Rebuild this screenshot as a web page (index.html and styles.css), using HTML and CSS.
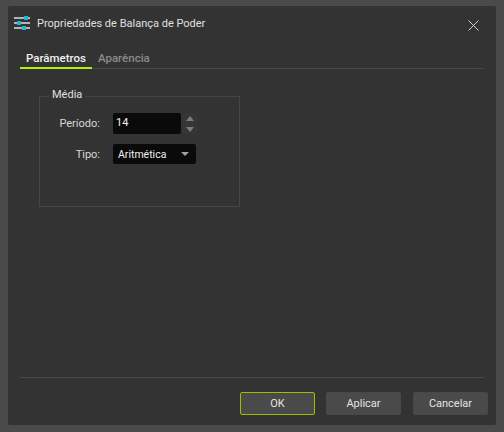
FILE: index.html
```html
<!DOCTYPE html>
<html lang="pt">
<head>
<meta charset="utf-8">
<title>Propriedades de Balança de Poder</title>
<link rel="stylesheet" href="styles.css">
</head>
<body>
<div class="dialog">
  <header class="titlebar">
    <svg class="app-icon" width="16" height="14" viewBox="0 0 16 14">
      <rect x="0" y="1" width="16" height="2" fill="#b4b4b4"/>
      <rect x="0" y="6" width="16" height="2" fill="#b4b4b4"/>
      <rect x="0" y="11" width="16" height="2" fill="#b4b4b4"/>
      <rect x="10" y="0" width="4" height="4" fill="#1fb8d0"/>
      <rect x="3" y="5" width="4" height="4" fill="#1fb8d0"/>
      <rect x="8" y="10" width="4" height="4" fill="#1fb8d0"/>
    </svg>
    <span class="title">Propriedades de Balança de Poder</span>
    <svg class="close" width="11" height="11" viewBox="0 0 11 11">
      <path d="M0.5 0.5 L10.5 10.5 M10.5 0.5 L0.5 10.5" stroke="#d0d0d0" stroke-width="1" fill="none"/>
    </svg>
  </header>
  <nav class="tabs">
    <span class="tab active">Parâmetros</span>
    <span class="tab">Aparência</span>
  </nav>
  <main class="content">
    <fieldset class="group">
      <legend class="legend">Média</legend>
      <div class="form">
        <label class="lbl">Período:</label>
        <div class="field-row">
          <div class="input">14</div>
          <div class="spin">
            <svg width="8" height="5" viewBox="0 0 8 5"><path d="M4 0 L8 5 L0 5 Z" fill="#7d7d7d"/></svg>
            <svg width="8" height="5" viewBox="0 0 8 5"><path d="M0 0 L8 0 L4 5 Z" fill="#7d7d7d"/></svg>
          </div>
        </div>
        <label class="lbl">Tipo:</label>
        <div class="select">
          <span>Aritmética</span>
          <svg width="8" height="4" viewBox="0 0 8 4"><path d="M0 0 L8 0 L4 4 Z" fill="#a0a0a0"/></svg>
        </div>
      </div>
    </fieldset>
  </main>
  <footer class="footer">
    <button class="btn primary">OK</button>
    <button class="btn">Aplicar</button>
    <button class="btn last">Cancelar</button>
  </footer>
</div>
</body>
</html>
```
FILE: styles.css
```css
* { box-sizing: border-box; }
html, body { height: 100%; }
body {
  margin: 0;
  padding: 6px 8px 7px;
  background: #4a4a4a;
  font-family: "Roboto", "Liberation Sans", sans-serif;
  font-size: 11px;
  color: #e4e4e4;
}
.dialog {
  height: 419px;
  background: #333333;
  border-radius: 2px;
  display: flex;
  flex-direction: column;
  padding: 0 12px;
}
.titlebar {
  height: 34px;
  display: flex;
  align-items: center;
  flex: none;
}
.app-icon { margin: 0 7px 0 -6px; flex: none; }
.title { flex: 1; color: #e0e0e0; font-size: 11px; }
.close { margin-right: 5px; margin-top: 4px; }
.tabs {
  margin-top: 3px;
  height: 26px;
  flex: none;
  display: flex;
  border-bottom: 1px solid #484848;
}
.tab {
  padding: 8px 6px 0;
  font-size: 11.5px;
  font-weight: 500;
  color: #8c8c8c;
  height: 26px;
}
.tab.active {
  color: #f0f0f0;
  border-bottom: 2px solid #b5f000;
}
.content { flex: 1; padding: 20px 0 0 19px; border-bottom: 1px solid #484848; }
.group {
  margin: 0;
  width: 201px;
  height: 118px;
  padding: 10px 0 0 0;
  border: 1px solid #464646;
}
.legend { margin-left: 9px; padding: 0 3px 2px; color: #e0e0e0; line-height: 12px; }
.form {
  display: grid;
  grid-template-columns: 73px auto;
  row-gap: 10px;
  align-items: center;
}
.lbl { text-align: right; padding-right: 13px; color: #d8d8d8; }
.field-row { display: flex; align-items: center; gap: 2px; }
.input {
  width: 68px;
  height: 21px;
  background: #0a0a0a;
  border-radius: 2px;
  padding: 0 3px;
  line-height: 19px;
  color: #f0f0f0;
}
.spin {
  width: 14px;
  height: 21px;
  display: flex;
  flex-direction: column;
  justify-content: center;
  align-items: center;
  gap: 6px;
  background: #363636;
}
.select {
  width: 83px;
  height: 20px;
  background: #0a0a0a;
  border-radius: 2px;
  padding: 0 7px 0 5px;
  display: flex;
  align-items: center;
  justify-content: space-between;
  color: #f0f0f0;
  font-size: 10.5px;
}
.footer {
  height: 47px;
  flex: none;
  display: flex;
  justify-content: flex-end;
  gap: 11px;
  padding-top: 14px;
  margin-right: -4px;
}
.btn {
  width: 75px;
  height: 23px;
  background: #4a4a4a;
  border: 1px solid #484848;
  border-radius: 2px;
  color: #e4e4e4;
  font: inherit;
  padding: 0;
}
.btn.last { margin-left: 1px; }
.btn.primary { border-color: #98c000; }
```
